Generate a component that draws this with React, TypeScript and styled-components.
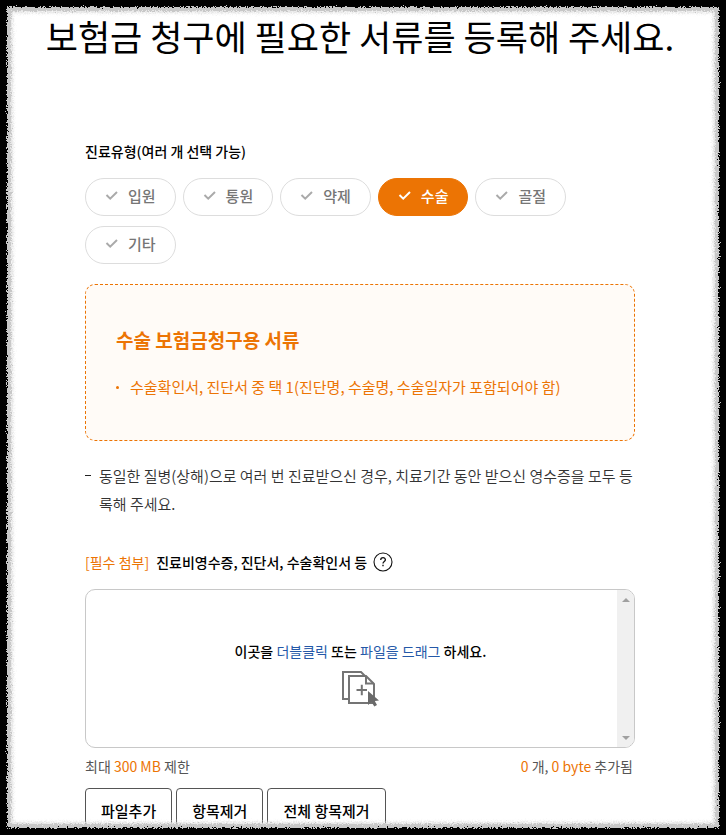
import React, { useState } from "react";
import styled, { createGlobalStyle } from "styled-components";

const ORANGE = "#ec7404";

const GlobalStyle = createGlobalStyle`
  *, *::before, *::after { box-sizing: border-box; }
  html { scrollbar-width: none; }
  body {
    margin: 0;
    background: #fff;
    color: #000;
    font-family: "Noto Sans CJK KR", "Noto Sans", sans-serif;
    font-size: 14px;
    line-height: 20px;
  }
  h1, h2, p, ul { margin: 0; padding: 0; }
  ul { list-style: none; }
`;

const Page = styled.main`
  padding-right: 6px;
`;

const RoughFrame = styled.div`
  position: fixed;
  inset: -30px;
  border: 37px solid #000;
  box-shadow: inset 0 0 0 4px #c8c8c8, inset 0 0 3px 6px #e2e2e2;
  filter: url(#rough-edge);
  pointer-events: none;
`;

const FilterDefs = styled.svg`
  position: absolute;
  width: 0;
  height: 0;
`;

const Title = styled.h1`
  padding: 10px 0 14px;
  font-size: 35px;
  line-height: 52px;
  font-weight: 400;
  text-align: center;
`;

const Content = styled.div`
  margin: 0 85px;
`;

const ChipGroup = styled.fieldset`
  margin: 65px 0 20px;
  padding: 0;
  border: 0;
  min-width: 0;
`;

const Legend = styled.legend`
  padding: 0;
  margin-bottom: 17px;
  font-weight: 500;
`;

const Chips = styled.div`
  display: flex;
  flex-wrap: wrap;
  gap: 10px 7px;
`;

const Chip = styled.label<{ $on: boolean }>`
  display: flex;
  align-items: center;
  gap: 9px;
  height: 38px;
  padding: 0 19px 2px;
  border: 1px solid ${(p) => (p.$on ? ORANGE : "#ddd")};
  border-radius: 19px;
  background: ${(p) => (p.$on ? ORANGE : "#fff")};
  color: ${(p) => (p.$on ? "#fff" : "#767676")};
  font-size: 15px;
  font-weight: 500;
  cursor: pointer;

  svg { color: ${(p) => (p.$on ? "#fff" : "#aaa")}; }
`;

const ChipInput = styled.input`
  position: absolute;
  opacity: 0;
  width: 1px;
  height: 1px;
  margin: 0;
`;

const DocCard = styled.section`
  padding: 40px 30px 41px;
  border: 1px dashed ${ORANGE};
  border-radius: 10px;
  background: #fffbf7;
  color: ${ORANGE};
`;

const DocTitle = styled.h2`
  margin-bottom: 20px;
  font-size: 19px;
  line-height: 30px;
  font-weight: 700;
`;

const DocItem = styled.li`
  display: flex;
  align-items: center;
  gap: 11px;
  font-size: 15px;
  line-height: 24px;

  &::before {
    content: "";
    flex: none;
    width: 3px;
    height: 3px;
    border-radius: 50%;
    background: ${ORANGE};
  }
`;

const Note = styled.li`
  display: flex;
  gap: 8px;
  margin: 21px 0 34px;
  color: #333;
  font-size: 15px;
  line-height: 28px;
  font-weight: 350;

  &::before {
    content: "";
    flex: none;
    width: 6px;
    height: 1px;
    margin-top: 13px;
    background: #222;
  }
`;

const AttachHead = styled.div`
  display: flex;
  align-items: center;
  margin-bottom: 17px;
  font-weight: 500;
`;

const Required = styled.span`
  margin-right: 7px;
  color: ${ORANGE};
  font-weight: 400;
`;

const HelpButton = styled.button`
  display: flex;
  margin-left: 6px;
  padding: 0;
  border: 0;
  background: none;
  cursor: pointer;
`;

const DropBox = styled.div`
  display: flex;
  height: 159px;
  overflow: hidden;
  border: 1px solid #c8c8c8;
  border-radius: 10px;
`;

const DropArea = styled.div`
  flex: 1;
  display: flex;
  flex-direction: column;
  align-items: center;
  padding: 51px 0 0 18px;
  font-weight: 500;

  svg { margin-top: 10px; }
`;

const Blue = styled.span`
  color: #2458a8;
  font-weight: 400;
`;

const ScrollTrack = styled.div`
  display: flex;
  flex-direction: column;
  justify-content: space-between;
  align-items: center;
  width: 17px;
  padding: 7px 0 6px;
  background: #f0f0f0;
`;

const Meta = styled.div`
  display: flex;
  justify-content: space-between;
  padding: 8px 2px 12px 0;
  color: #555;
`;

const Strong = styled.span`
  color: ${ORANGE};
`;

const Actions = styled.div`
  display: flex;
  gap: 4px;
`;

const ActionButton = styled.button`
  height: 46px;
  padding: 0 15px 2px;
  border: 1px solid #555;
  border-radius: 4px;
  background: #fff;
  color: #000;
  font-family: inherit;
  font-size: 15px;
  font-weight: 500;
  cursor: pointer;
`;

const CheckIcon = () => (
  <svg width="14" height="12" viewBox="0 0 14 12" fill="none" aria-hidden="true">
    <path d="M1.5 5 L5.2 8.6 L12 2" stroke="currentColor" strokeWidth="2" />
  </svg>
);

const HelpIcon = () => (
  <svg width="20" height="20" viewBox="0 0 20 20" fill="none" stroke="#111" aria-hidden="true">
    <circle cx="10" cy="10" r="9" strokeWidth="1.1" />
    <path d="M7.7 8 C7.7 5 12.4 5 12.4 7.8 C12.4 9.6 10 9.6 10 11.6" strokeWidth="1.3" />
    <path d="M10 12.8 V14.2" strokeWidth="1.4" />
  </svg>
);

const FilesIcon = () => (
  <svg width="38" height="36" viewBox="1 0 38 36" fill="none" stroke="#747474" strokeWidth="2" aria-hidden="true">
    <path d="M7 28 H2 V1 H20 L24 5" />
    <path d="M8 5 H25 L33 13 V32 H8 Z" />
    <path d="M25 5 V12.5 H33" />
    <path d="M15.5 19 H26 M20.8 13.8 V24.2" />
    <path d="M27 20 V34 L30.5 31 L33.3 35.5 L36 34 L33.8 30 L38 29.5 Z" fill="#6a6a6a" stroke="none" />
  </svg>
);

const Arrow = ({ down = false }: { down?: boolean }) => (
  <svg width="8" height="5" viewBox="0 0 8 5" aria-hidden="true">
    <path d={down ? "M0 0 H8 L4 4 Z" : "M0 5 H8 L4 1 Z"} fill="#a0a0a0" />
  </svg>
);

const TYPES = ["입원", "통원", "약제", "수술", "골절", "기타"];

export default function App() {
  const [selected, setSelected] = useState<string[]>(["수술"]);
  const toggle = (type: string) =>
    setSelected((list) =>
      list.includes(type) ? list.filter((t) => t !== type) : [...list, type]
    );

  return (
    <>
      <GlobalStyle />
      <Page>
        <Title>보험금 청구에 필요한 서류를 등록해 주세요.</Title>
        <Content>
          <ChipGroup>
            <Legend>진료유형(여러 개 선택 가능)</Legend>
            <Chips>
              {TYPES.map((type) => (
                <Chip key={type} $on={selected.includes(type)}>
                  <ChipInput
                    type="checkbox"
                    checked={selected.includes(type)}
                    onChange={() => toggle(type)}
                  />
                  <CheckIcon />
                  {type}
                </Chip>
              ))}
            </Chips>
          </ChipGroup>

          <DocCard>
            <DocTitle>수술 보험금청구용 서류</DocTitle>
            <ul>
              <DocItem>수술확인서, 진단서 중 택 1(진단명, 수술명, 수술일자가 포함되어야 함)</DocItem>
            </ul>
          </DocCard>

          <ul>
            <Note>
              동일한 질병(상해)으로 여러 번 진료받으신 경우, 치료기간 동안 받으신 영수증을 모두 등록해 주세요.
            </Note>
          </ul>

          <AttachHead>
            <Required>[필수 첨부]</Required>
            진료비영수증, 진단서, 수술확인서 등
            <HelpButton type="button" aria-label="도움말">
              <HelpIcon />
            </HelpButton>
          </AttachHead>

          <DropBox>
            <DropArea>
              <p>
                이곳을 <Blue>더블클릭</Blue> 또는 <Blue>파일을 드래그</Blue> 하세요.
              </p>
              <FilesIcon />
            </DropArea>
            <ScrollTrack>
              <Arrow />
              <Arrow down />
            </ScrollTrack>
          </DropBox>

          <Meta>
            <span>최대 <Strong>300 MB</Strong> 제한</span>
            <span><Strong>0</Strong> 개, <Strong>0 byte</Strong> 추가됨</span>
          </Meta>

          <Actions>
            <ActionButton type="button">파일추가</ActionButton>
            <ActionButton type="button">항목제거</ActionButton>
            <ActionButton type="button">전체 항목제거</ActionButton>
          </Actions>
        </Content>
      </Page>
      <FilterDefs aria-hidden="true">
        <filter id="rough-edge" x="0" y="0" width="100%" height="100%">
          <feTurbulence type="fractalNoise" baseFrequency="0.8" numOctaves="2" seed="4" result="noise" />
          <feDisplacementMap in="SourceGraphic" in2="noise" scale="6" xChannelSelector="R" yChannelSelector="G" />
        </filter>
      </FilterDefs>
      <RoughFrame />
    </>
  );
}
